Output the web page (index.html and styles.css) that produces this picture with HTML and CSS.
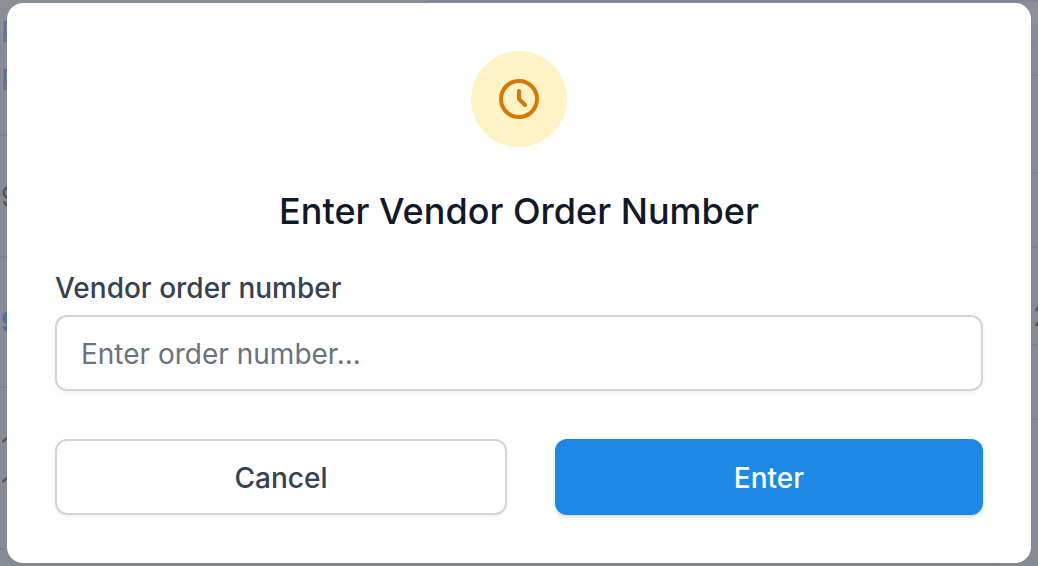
FILE: index.html
```html
<!DOCTYPE html>
<html lang="en">
<head>
<meta charset="utf-8">
<meta name="viewport" content="width=device-width, initial-scale=1">
<title>Enter Vendor Order Number</title>
<link rel="stylesheet" href="styles.css">
</head>
<body>
<div class="page" aria-hidden="true">
  <div class="col col-left">
    <div class="cell cell-links"><span>P</span><span>P</span></div>
    <div class="cell cell-short">9</div>
    <div class="cell cell-strong">9</div>
    <div class="cell cell-tall"><span>1</span><span>1</span></div>
  </div>
  <div class="col col-right">
    <div class="row row-s"></div>
    <div class="row row-l"></div>
    <div class="row row-s"></div>
    <div class="row row-l row-value">2</div>
    <div class="row row-s"></div>
  </div>
</div>
<div class="overlay">
  <form class="modal" role="dialog" aria-modal="true" aria-labelledby="modal-title">
    <div class="badge">
      <svg class="clock" viewBox="0 0 24 24" fill="none" stroke="currentColor" stroke-width="2" stroke-linecap="round" stroke-linejoin="round" aria-hidden="true">
        <path d="M12 8v4l3 3m6-3a9 9 0 11-18 0 9 9 0 0118 0z"/>
      </svg>
    </div>
    <h1 class="title" id="modal-title">Enter Vendor Order Number</h1>
    <label class="label" for="order-number">Vendor order number</label>
    <input class="input" id="order-number" type="text" placeholder="Enter order number...">
    <div class="actions">
      <button class="button button-plain" type="button">Cancel</button>
      <button class="button button-primary" type="submit">Enter</button>
    </div>
  </form>
</div>
</body>
</html>
```
FILE: styles.css
```css
* { box-sizing: border-box; }

body {
  margin: 0;
  min-height: 100vh;
  overflow: hidden;
  background: #8d919c;
  font-family: Inter, "Liberation Sans", sans-serif;
}

.page {
  position: absolute;
  inset: 0;
  display: flex;
  justify-content: space-between;
  overflow: hidden;
  font-size: 28px;
  line-height: 48px;
  color: #555a67;
}

.col-left { width: 40%; }
.col-right {
  width: 60%;
  border-top: 2px solid #838896;
  border-top-left-radius: 16px;
}

.cell,
.row { border-bottom: 2px solid #858995; }

.cell {
  display: flex;
  flex-direction: column;
  padding-left: 1px;
}
.cell-links { height: 136px; padding-top: 8px; color: #5c77a5; }
.cell-short { height: 122px; justify-content: center; padding-top: 2px; }
.cell-strong { height: 130px; justify-content: center; color: #4b78a9; font-weight: 700; }
.cell-tall { height: 162px; padding-top: 40px; line-height: 40px; }

.row-s { height: 74px; }
.row-l { height: 98px; }
.row-value { padding-top: 44px; text-align: right; margin-right: -12px; }

.overlay {
  position: relative;
  display: flex;
  align-items: center;
  min-height: 100vh;
  padding: 3px 7px;
}

.modal {
  display: flex;
  flex-direction: column;
  width: 100%;
  padding: 48px;
  border-radius: 16px;
  background: #fff;
  box-shadow: 0 20px 40px rgba(0, 0, 0, 0.1);
}

.badge {
  display: flex;
  align-items: center;
  justify-content: center;
  align-self: center;
  width: 96px;
  height: 96px;
  border-radius: 50%;
  background: #fef3c7;
  color: #d97706;
}
.clock { width: 48px; height: 48px; }

.title {
  margin: 40px 0 32px;
  font-size: 36px;
  line-height: 48px;
  font-weight: 500;
  text-align: center;
  color: #111827;
}

.label {
  margin-bottom: 6px;
  font-size: 28px;
  line-height: 42px;
  font-weight: 500;
  color: #374151;
}

.input,
.button {
  height: 76px;
  padding: 18px 24px 16px;
  border: 2px solid #d1d5db;
  border-radius: 12px;
  background: #fff;
  font-family: inherit;
  font-size: 28px;
  box-shadow: 0 2px 4px rgba(0, 0, 0, 0.05);
}
.input { width: 100%; color: #111827; }
.input::placeholder { color: #6b7280; opacity: 1; }

.actions {
  display: grid;
  grid-template-columns: 452fr 428fr;
  gap: 48px;
  margin-top: 48px;
}
.button { font-weight: 500; color: #374151; }
.button-primary {
  border-color: #1e88e5;
  background: #1e88e5;
  color: #fff;
  box-shadow: 0 2px 4px rgba(0, 0, 0, 0.15);
}
```
